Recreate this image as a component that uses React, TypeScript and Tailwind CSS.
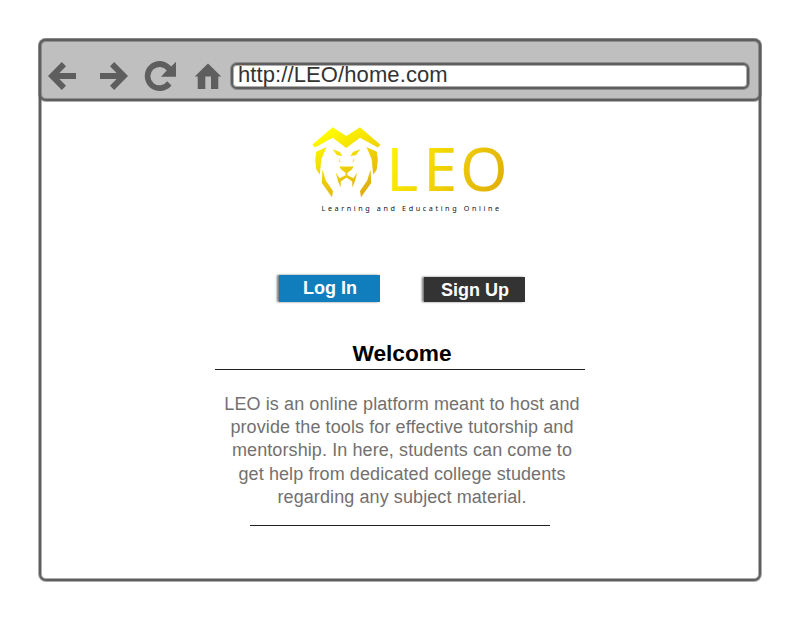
const lines = [
  'LEO is an online platform meant to host and',
  'provide the tools for effective tutorship and',
  'mentorship. In here, students can come to',
  'get help from dedicated college students',
  'regarding any subject material.',
];

function NavIcons() {
  return (
    <svg className="ml-[6px] mt-[19px] h-[34px] w-[176px] shrink-0" viewBox="47 60 176 34" fill="#5e5e5e">
      <path d="M48 76 61.8 62 66 66.2 59.4 73H76V79H59.4L66 85.8 61.8 90Z" />
      <path d="M128 76 114.2 62 110 66.2 116.6 73H100V79H116.6L110 85.8 114.2 90Z" />
      <path d="M176 61.8V76.7H161L166.8 70.4A9.2 9.2 0 1 0 167.2 81.3L171.5 85.4A15 15 0 1 1 171.2 66.4Z" />
      <path d="M208 63.5 221.3 76.5H218.3V89H211V76.5H205.3V89H197.7V76.5H194.7Z" />
    </svg>
  );
}

function Logo() {
  return (
    <svg className="mt-[19px] h-[100px] w-[210px]" viewBox="305 120 210 100">
      <defs>
        <linearGradient id="mane" gradientUnits="userSpaceOnUse" x1="330" y1="132" x2="364" y2="196">
          <stop offset="0" stopColor="#fffa00" />
          <stop offset="1" stopColor="#deaa10" />
        </linearGradient>
        <linearGradient id="word" gradientUnits="userSpaceOnUse" x1="396" y1="142" x2="500" y2="200">
          <stop offset="0" stopColor="#fcf200" />
          <stop offset="1" stopColor="#e0ac0a" />
        </linearGradient>
      </defs>
      <g fill="url(#mane)">
        <path d="M312.3 144.8 332.7 127.3 346.3 136 360 127.3 380.5 144.8 377.8 147.5 360 137.8 346.3 148 332.7 137.8 315 147.5Z" />
        <path d="M316.2 151.8 326.6 147 321.4 159 319.8 174.5 316.4 170 315.2 160Z" />
        <path d="M376.8 151.8 366.4 147 371.6 159 373.2 174.5 376.6 170 377.8 160Z" />
        <path d="M332.5 149.2 340 152 342.2 156.2 336.8 155Z" />
        <path d="M360.3 149.2 352.8 152 350.6 156.2 356 155Z" />
        <path d="M339.2 166.4H353.8L351.6 169.8 347.4 172.8V175.2L353.4 178.2 357.2 172.4 355 181.2 352.4 187.6 352.2 181.4 346.5 177.6 340.8 181.4 340.6 187.6 338 181.2 335.8 172.4 339.6 178.2 345.6 175.2V172.8L341.4 169.8Z" />
        <path d="M322.4 169.6 325.8 180.4 333 191 332 197.2 321.8 183Z" />
        <path d="M370.6 169.6 367.2 180.4 360 191 361 197.2 371.2 183Z" />
      </g>
      <path d="M339.2 157.5 340.2 161 341.8 162.6 338.8 161.6ZM353.8 157.5 352.8 161 351.2 162.6 354.2 161.6Z" fill="#f4e260" />
      <text y="191.3" x="386.3 423.3 460.1" fontFamily="'Noto Sans', sans-serif" fontSize="61" fill="url(#word)">LEO</text>
      <text x="321.5" y="211.2" textLength="177.5" fontFamily="'Noto Sans', sans-serif" fontSize="7.2" fill="#101018">Learning and Educating Online</text>
    </svg>
  );
}

export default function App() {
  return (
    <div className="h-[620px] w-[800px] overflow-hidden bg-white pl-[39px] pt-[39px] font-['Liberation_Sans',Arial,sans-serif]">
      <main className="flex h-[542px] w-[722px] flex-col items-center rounded-[7px] border-2 border-[#5e5e5e] bg-white shadow-[0_0_0_1px_#5e5e5e80,inset_0_0_0_1px_#5e5e5e80]">
        <header className="-mx-[2px] -mt-[2px] flex h-[62px] w-[722px] shrink-0 rounded-[7px] border-2 border-[#5e5e5e] bg-[#bfbfbf] shadow-[0_0_0_1px_#5e5e5e80,inset_0_0_0_1px_#5e5e5e80]">
          <NavIcons />
          <div className="ml-[8px] mt-[22px] flex h-[26px] w-[518px] items-center rounded-[6px] border-2 border-[#5e5e5e] bg-white pl-[5px] text-[22px] leading-none tracking-[0.1px] text-[#333] shadow-[0_0_0_1px_#5e5e5e80,inset_0_0_0_1px_#5e5e5e80]">
            <span className="-mt-[3px]">http://LEO/home.com</span>
          </div>
        </header>
        <div className="pl-[20px]"><Logo /></div>
        <div className="mt-[55px] flex h-[29px] w-[248px] shrink-0 translate-x-[1px] justify-between pl-[2px] text-[18px] font-bold leading-[27px] text-white">
          <button className="h-[27px] w-[101px] bg-[#107ebd] pl-[1px] shadow-[-2px_0_2px_#777]">Log In</button>
          <button className="mt-[2px] h-[25px] w-[101px] bg-[#333] pl-[1px] pt-[1px] leading-[25px] shadow-[-2px_0_2px_#777]">Sign Up</button>
        </div>
        <h1 className="mt-[36px] w-[370px] border-b border-[#222] pb-[2px] pl-[4px] text-center text-[22.7px] font-bold leading-[27px] text-black">Welcome</h1>
        <section className="mt-[22.6px] flex flex-col items-center pl-[4px] text-[18px] leading-[23.4px] tracking-[0.095px] text-[#737070]">
          {lines.map((line) => <p key={line} className="whitespace-nowrap">{line}</p>)}
        </section>
        <hr className="mt-[15px] w-[300px] border-t border-[#222]" />
      </main>
    </div>
  );
}
